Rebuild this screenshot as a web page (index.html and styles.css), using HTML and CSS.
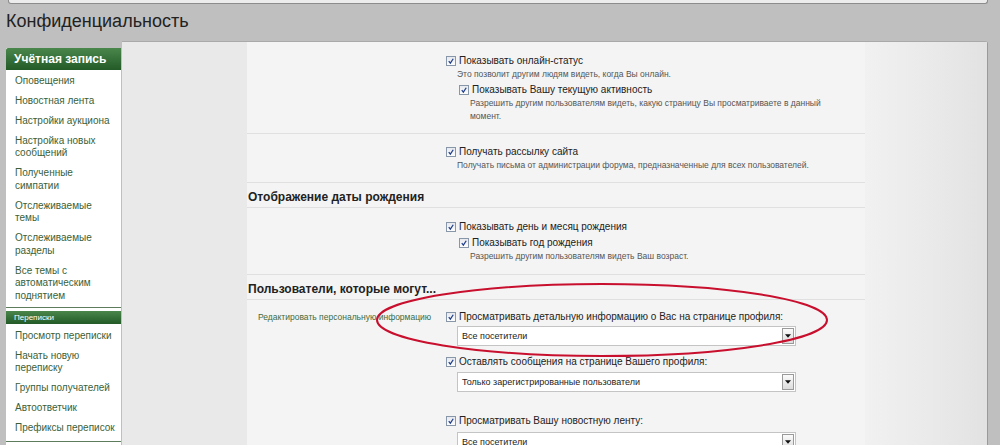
FILE: index.html
```html
<!DOCTYPE html>
<html lang="ru">
<head>
<meta charset="utf-8">
<title>Конфиденциальность</title>
<link rel="stylesheet" href="styles.css">
</head>
<body>
<div class="topbar"></div>
<h1 class="title">Конфиденциальность</h1>
<div class="layout">
  <nav class="sidebar">
    <div class="side-head">Учётная запись</div>
    <ul class="side-list side-list-1">
      <li>Оповещения</li>
      <li>Новостная лента</li>
      <li>Настройки аукциона</li>
      <li>Настройка новых сообщений</li>
      <li>Полученные симпатии</li>
      <li>Отслеживаемые темы</li>
      <li>Отслеживаемые разделы</li>
      <li>Все темы с автоматическим поднятием</li>
    </ul>
    <div class="side-head side-head-small">Переписки</div>
    <ul class="side-list side-list-2">
      <li>Просмотр переписки</li>
      <li>Начать новую переписку</li>
      <li>Группы получателей</li>
      <li>Автоответчик</li>
      <li>Префиксы переписок</li>
    </ul>
  </nav>
  <main class="panel">
    <div class="panel-left"></div>
    <div class="form">
      <div class="row row-a">
        <div class="row-label"></div>
        <div class="row-ctrl">
          <div class="check"><span class="box"><svg viewBox="0 0 10 10"><path d="M2.2 5.2 L4.2 7.6 L7.8 2.2" /></svg></span>Показывать онлайн-статус</div>
          <p class="hint">Это позволит другим людям видеть, когда Вы онлайн.</p>
          <div class="nested">
            <div class="check"><span class="box"><svg viewBox="0 0 10 10"><path d="M2.2 5.2 L4.2 7.6 L7.8 2.2" /></svg></span>Показывать Вашу текущую активность</div>
            <p class="hint">Разрешить другим пользователям видеть, какую страницу Вы просматриваете в данный момент.</p>
          </div>
        </div>
      </div>
      <div class="row row-b">
        <div class="row-label"></div>
        <div class="row-ctrl">
          <div class="check"><span class="box"><svg viewBox="0 0 10 10"><path d="M2.2 5.2 L4.2 7.6 L7.8 2.2" /></svg></span>Получать рассылку сайта</div>
          <p class="hint">Получать письма от администрации форума, предназначенные для всех пользователей.</p>
        </div>
      </div>
      <h3 class="section">Отображение даты рождения</h3>
      <div class="row row-c">
        <div class="row-label"></div>
        <div class="row-ctrl">
          <div class="check"><span class="box"><svg viewBox="0 0 10 10"><path d="M2.2 5.2 L4.2 7.6 L7.8 2.2" /></svg></span>Показывать день и месяц рождения</div>
          <div class="nested">
            <div class="check"><span class="box"><svg viewBox="0 0 10 10"><path d="M2.2 5.2 L4.2 7.6 L7.8 2.2" /></svg></span>Показывать год рождения</div>
            <p class="hint">Разрешить другим пользователям видеть Ваш возраст.</p>
          </div>
        </div>
      </div>
      <h3 class="section">Пользователи, которые могут...</h3>
      <div class="row row-d">
        <div class="row-label">Редактировать персональную информацию</div>
        <div class="row-ctrl">
          <div class="check"><span class="box"><svg viewBox="0 0 10 10"><path d="M2.2 5.2 L4.2 7.6 L7.8 2.2" /></svg></span>Просматривать детальную информацию о Вас на странице профиля:</div>
          <div class="select"><span class="select-text">Все посетители</span><span class="select-btn"><svg viewBox="0 0 7 4"><path d="M0 0 H7 L3.5 4 Z"/></svg></span></div>
          <div class="check check-2"><span class="box"><svg viewBox="0 0 10 10"><path d="M2.2 5.2 L4.2 7.6 L7.8 2.2" /></svg></span>Оставлять сообщения на странице Вашего профиля:</div>
          <div class="select select-2"><span class="select-text">Только зарегистрированные пользователи</span><span class="select-btn"><svg viewBox="0 0 7 4"><path d="M0 0 H7 L3.5 4 Z"/></svg></span></div>
          <div class="check check-3"><span class="box"><svg viewBox="0 0 10 10"><path d="M2.2 5.2 L4.2 7.6 L7.8 2.2" /></svg></span>Просматривать Вашу новостную ленту:</div>
          <div class="select select-3"><span class="select-text">Все посетители</span><span class="select-btn"><svg viewBox="0 0 7 4"><path d="M0 0 H7 L3.5 4 Z"/></svg></span></div>
        </div>
      </div>
    </div>
    <div class="panel-right"></div>
  </main>
</div>
<svg class="mark" width="1000" height="445" viewBox="0 0 1000 445" aria-hidden="true">
  <ellipse cx="602" cy="320" rx="225" ry="36" />
</svg>
</body>
</html>
```

FILE: styles.css
```css
html, body {
  margin: 0;
  padding: 0;
  overflow: hidden;
}
body {
  background: #bfbfbf;
  font-family: "Liberation Sans", Arial, sans-serif;
  color: #222;
  position: relative;
  height: 445px;
}
.topbar {
  margin: 0 12px 0 8px;
  height: 3px;
  background: #ececec;
  border: 1px solid #8c8c8c;
  border-top: 0;
  border-radius: 0 0 3px 3px;
}
.title {
  margin: 5px 0 0 6px;
  font-family: "Liberation Sans", Arial, sans-serif;
  font-weight: 400;
  font-size: 18px;
  line-height: 24px;
  color: #222;
}
.layout {
  display: flex;
  margin-top: 8px;
  padding-left: 6px;
}
.sidebar {
  width: 115px;
  margin-top: 7px;
  background: #fff;
  flex: none;
}
.side-head {
  height: 22px;
  line-height: 22px;
  padding-left: 8px;
  color: #fff;
  font-weight: bold;
  font-size: 12px;
  background: linear-gradient(#4a874c, #235a27);
  border-radius: 2px 0 0 0;
}
.side-head-small {
  height: 13px;
  line-height: 13px;
  font-size: 8px;
  font-weight: normal;
  margin-top: 3px;
  border-radius: 0;
}
.side-list {
  list-style: none;
  margin: 0;
  padding: 1px 0 2px;
  border-bottom: 1px solid #5c7c5c;
}
.side-list-1 li:last-child {
  padding-bottom: 2.75px;
}
.side-list-2 {
  padding-top: 2px;
}
.side-list li {
  padding: 3.75px 6px 3.75px 9px;
  font-size: 10px;
  line-height: 12.5px;
  color: #3a5f3a;
}
.panel {
  flex: 1;
  margin-left: 1px;
  margin-right: 12px;
  display: flex;
  border-top: 1px solid #a9a9a9;
  border-right: 1px solid #9a9a9a;
  border-radius: 0 3px 0 0;
  background: #e9e9e9;
  min-height: 420px;
}
.panel-left {
  width: 125px;
  flex: none;
}
.form {
  width: 618px;
  flex: none;
  background: #f4f4f4;
}
.panel-right {
  flex: 1;
  background: linear-gradient(90deg, #f1f1f1, #e9e9e9 60%, #e2e2e2);
}
.row {
  display: grid;
  grid-template-columns: 199px 1fr;
  border-bottom: 1px solid #e0e0e0;
}
.row-a { padding: 12px 0 10px; }
.row-b { padding: 11px 0 11px; }
.row-c { padding: 12px 0 11px; }
.row-d { padding: 10px 0 20px; border-bottom: 0; }
.row-label {
  font-size: 8.5px;
  line-height: 14px;
  color: #3e6b3e;
  padding-left: 11px;
}
.row-ctrl {
  padding-right: 40px;
}
.check {
  display: flex;
  align-items: center;
  font-size: 10px;
  line-height: 14px;
  color: #222;
}
.box {
  width: 8px;
  height: 8px;
  border: 1px solid #8796a8;
  background: linear-gradient(#e6e9ee, #fdfdfd);
  margin-right: 3px;
  display: flex;
  flex: none;
}
.box svg {
  width: 8px;
  height: 8px;
  fill: none;
  stroke: #22408a;
  stroke-width: 1.6;
}
.hint {
  margin: 0;
  padding-left: 11px;
  font-size: 8.5px;
  line-height: 13px;
  color: #555;
}
.row-b .hint {
  line-height: 12px;
}
.nested {
  margin-top: 2px;
  padding-left: 13px;
}
.section {
  margin: 0;
  padding-top: 4px;
  line-height: 20px;
  font-size: 12px;
  font-weight: bold;
  color: #222;
  padding-left: 1px;
  border-bottom: 1px solid #e0e0e0;
}
.select {
  margin: 2px 0 0 11px;
  width: 337px;
  height: 18px;
  border: 1px solid #c4c4c4;
  background: #fff;
  display: flex;
  align-items: center;
  justify-content: space-between;
}
.select-text {
  font-size: 9px;
  color: #222;
  padding-left: 4px;
}
.select-btn {
  width: 10px;
  height: 14px;
  margin-right: 1px;
  border: 1px solid #9a9a9a;
  background: linear-gradient(#fbfbfb, #dcdcdc);
  display: flex;
  align-items: center;
  justify-content: center;
}
.select-btn svg {
  width: 6px;
  height: 4px;
  fill: #111;
}
.check-2 { margin-top: 9px; }
.select-2 { margin-top: 3px; }
.check-3 { margin-top: 22px; }
.select-3 { margin-top: 4px; }
.mark {
  position: absolute;
  left: 0;
  top: 0;
  pointer-events: none;
}
.mark ellipse {
  fill: none;
  stroke: #c8102e;
  stroke-width: 2;
}
```
